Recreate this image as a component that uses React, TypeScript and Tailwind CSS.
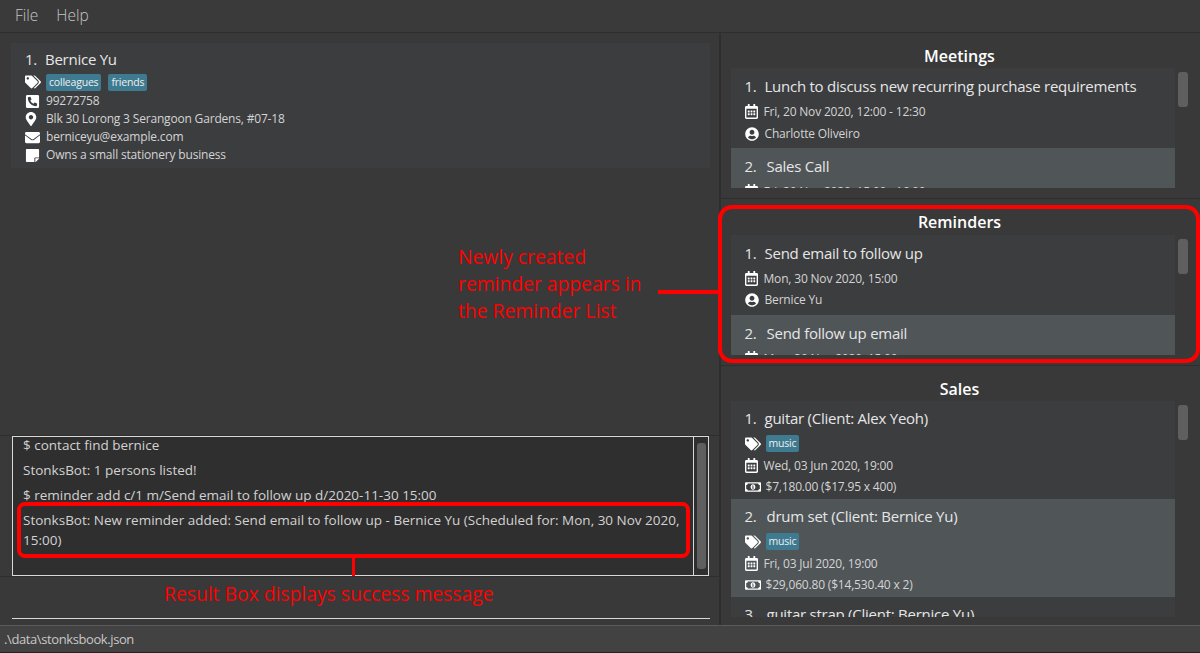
import React from 'react';
import {
  FaTags,
  FaPhoneSquareAlt,
  FaMapMarkerAlt,
  FaEnvelope,
  FaStickyNote,
  FaRegCalendarAlt,
  FaUserCircle,
  FaRegMoneyBillAlt,
} from 'react-icons/fa';

const Tag: React.FC<{ label: string }> = ({ label }) => (
  <span className="mr-[7px] inline-block h-[17px] rounded-[2px] bg-[#3e7b91] px-[3px] text-[10.5px] leading-[17px] tracking-[-0.2px] text-[#eeeeee]">
    {label}
  </span>
);

const Title: React.FC<{ index: string; text: string; gap?: string }> = ({ index, text, gap = 'w-[20px]' }) => (
  <div className="flex h-[20px] items-center text-[15px] font-medium tracking-[-0.25px] text-[#e6e6e6]">
    <span className={`shrink-0 ${gap}`}>{index}</span>
    <span className="whitespace-nowrap">{text}</span>
  </div>
);

const Meta: React.FC<{ icon: React.ReactNode; text: string; iconW?: string; extra?: string }> = ({
  icon,
  text,
  iconW = 'w-[19px]',
  extra = '',
}) => (
  <div className={`flex h-[21px] items-center text-[12px] tracking-[-0.18px] text-[#d4d4d4] ${extra}`}>
    <span className={`flex shrink-0 items-center text-white ${iconW}`}>{icon}</span>
    <span className="whitespace-nowrap">{text}</span>
  </div>
);

const Calendar = <FaRegCalendarAlt className="h-[15px] w-[13px]" />;
const User = <FaUserCircle className="h-[14px] w-[14px]" />;
const Money = <FaRegMoneyBillAlt className="h-[14px] w-[16px]" />;
const Tags = <FaTags className="h-[14px] w-[16px]" />;

const ListRow: React.FC<{ selected?: boolean; height: string; top?: string; children: React.ReactNode }> = ({
  selected,
  height,
  top = 'pt-[8px]',
  children,
}) => (
  <div className={`shrink-0 pl-[13.5px] ${top} ${height} ${selected ? 'bg-[#505558]' : 'bg-[#3c3d3f]'}`}>{children}</div>
);

const Panel: React.FC<{
  title: string;
  listHeight: string;
  panelHeight: string;
  titleHeight?: string;
  children: React.ReactNode;
}> = ({ title, listHeight, panelHeight, titleHeight = 'h-[24px]', children }) => (
  <section className={`flex shrink-0 flex-col border-b border-[#2e2e2e] pl-[10px] ${panelHeight}`}>
    <h2 className={`flex shrink-0 items-start justify-center pr-[12px] text-[16px] font-semibold leading-[24px] text-white ${titleHeight}`}>
      {title}
    </h2>
    <div className={`flex ${listHeight}`}>
      <div className="flex w-[444px] flex-col overflow-hidden">{children}</div>
      <div className="ml-[3px] w-[10px] pt-[4px]">
        <div className="h-[35px] rounded-[3px] bg-[#5f5f5f]" />
      </div>
    </div>
  </section>
);

const LogLine: React.FC<{ children: React.ReactNode }> = ({ children }) => (
  <p className="mb-[5px] text-[13.5px] font-medium leading-[20px] text-[#d2d2d2]">{children}</p>
);

export default function App() {
  return (
    <div className="relative flex h-[653px] w-[1200px] flex-col overflow-hidden bg-[#393939] font-['Open_Sans','Noto_Sans',sans-serif]">
      <header className="flex h-[33px] shrink-0 items-center gap-[18px] border-b border-[#2e2e2e] bg-[#3a3a3a] pl-[15px] text-[15.5px] font-light text-[#c4c4c4]">
        <span>File</span>
        <span>Help</span>
      </header>

      <main className="flex min-h-0 flex-1">
        <div className="flex w-[721px] shrink-0 flex-col border-r-2 border-[#2e2e2e]">
          <div className="min-h-0 flex-1 border-b border-[#2e2e2e] pl-[11px] pr-[9px] pt-[10px]">
            <article className="h-[125px] bg-[#3c3d3f] pl-[14px] pt-[6px]">
              <Title index="1." text="Bernice Yu" />
              <div className="mt-[3px] flex h-[20px] items-center">
                <span className="flex w-[21px] text-white">{Tags}</span>
                <Tag label="colleagues" />
                <Tag label="friends" />
              </div>
              <div className="flex h-[18px] items-center text-[12px] tracking-[-0.18px] text-[#d4d4d4]">
                <FaPhoneSquareAlt className="mr-[6px] h-[15px] w-[15px] text-white" />
                99272758
              </div>
              <div className="flex h-[18px] items-center text-[12px] tracking-[-0.18px] text-[#d4d4d4]">
                <span className="flex w-[21px]"><FaMapMarkerAlt className="h-[14px] w-[12px] text-white" /></span>
                Blk 30 Lorong 3 Serangoon Gardens, #07-18
              </div>
              <div className="flex h-[18px] items-center text-[12px] tracking-[-0.18px] text-[#d4d4d4]">
                <FaEnvelope className="mr-[6px] h-[15px] w-[15px] text-white" />
                berniceyu@example.com
              </div>
              <div className="flex h-[18px] items-center text-[12px] tracking-[-0.18px] text-[#d4d4d4]">
                <FaStickyNote className="mr-[6px] h-[15px] w-[15px] text-white" />
                Owns a small stationery business
              </div>
            </article>
          </div>

          <div className="ml-[12px] flex h-[140px] w-[697px] shrink-0 border border-[#d8d8d8] bg-[#2f2f2f]">
            <div className="w-[681px] shrink-0 overflow-hidden border-r border-[#d8d8d8] pl-[10px]">
              <div className="-mt-[2px]">
                <LogLine>$ contact find bernice</LogLine>
                <LogLine>StonksBot: 1 persons listed!</LogLine>
                <LogLine>$ reminder add c/1 m/Send email to follow up d/2020-11-30 15:00</LogLine>
                <LogLine>
                  StonksBot: New reminder added: Send email to follow up - Bernice Yu (Scheduled for: Mon, 30 Nov 2020, 15:00)
                </LogLine>
              </div>
            </div>
            <div className="flex-1 py-[6px] pl-[3px] pr-[2px]">
              <div className="h-full rounded-[3px] bg-[#5f5f5f]" />
            </div>
          </div>

          <div className="h-[49px] shrink-0 border-t border-[#2e2e2e] pl-[12px] pr-[9px]">
            <div className="h-[42px] border-b border-[#d8d8d8]" />
          </div>
        </div>

        <div className="flex min-w-0 flex-1 flex-col pt-[11px]">
          <Panel title="Meetings" panelHeight="h-[155px]" listHeight="h-[120px]">
            <ListRow height="h-[80px]">
              <Title index="1." text="Lunch to discuss new recurring purchase requirements" />
              <div className="mt-[5px]"><Meta icon={Calendar} text="Fri, 20 Nov 2020, 12:00 - 12:30" /></div>
              <Meta icon={User} text="Charlotte Oliveiro" iconW="w-[20px]" extra="mt-[1px]" />
            </ListRow>
            <ListRow selected height="h-[80px]">
              <Title index="2." text="Sales Call" gap="w-[22px]" />
              <div className="mt-[5px]"><Meta icon={Calendar} text="Fri, 20 Nov 2020, 15:00 - 16:00" /></div>
            </ListRow>
          </Panel>

          <Panel title="Reminders" panelHeight="h-[167px] pt-[11px]" titleHeight="h-[25px]" listHeight="h-[120px]">
            <ListRow height="h-[80px]">
              <Title index="1." text="Send email to follow up" />
              <div className="mt-[5px]"><Meta icon={Calendar} text="Mon, 30 Nov 2020, 15:00" /></div>
              <Meta icon={User} text="Bernice Yu" iconW="w-[20px]" />
            </ListRow>
            <ListRow selected height="h-[80px]">
              <Title index="2." text="Send follow up email" gap="w-[22px]" />
              <div className="mt-[5px]"><Meta icon={Calendar} text="Mon, 30 Nov 2020, 15:00" /></div>
            </ListRow>
          </Panel>

          <Panel title="Sales" panelHeight="flex-1 pt-[11px] border-b-0" listHeight="h-[216px]">
            <ListRow height="h-[98px]" top="pt-[7px]">
              <Title index="1." text="guitar (Client: Alex Yeoh)" />
              <div className="mt-[4px] flex h-[23px] items-center">
                <span className="flex w-[21px] text-white">{Tags}</span>
                <Tag label="music" />
              </div>
              <Meta icon={Calendar} text="Wed, 03 Jun 2020, 19:00" />
              <Meta icon={Money} text="$7,180.00 ($17.95 x 400)" iconW="w-[21px]" />
            </ListRow>
            <ListRow selected height="h-[98px]" top="pt-[7px]">
              <Title index="2." text="drum set (Client: Bernice Yu)" gap="w-[22px]" />
              <div className="mt-[4px] flex h-[23px] items-center">
                <span className="flex w-[21px] text-white">{Tags}</span>
                <Tag label="music" />
              </div>
              <Meta icon={Calendar} text="Fri, 03 Jul 2020, 19:00" />
              <Meta icon={Money} text="$29,060.80 ($14,530.40 x 2)" iconW="w-[21px]" />
            </ListRow>
            <ListRow height="h-[98px]" top="pt-[7px]">
              <Title index="3." text="guitar strap (Client: Bernice Yu)" gap="w-[22px]" />
            </ListRow>
          </Panel>
        </div>
      </main>

      <footer className="flex h-[28px] shrink-0 items-center border-b border-t border-b-[#222222] border-t-[#5a5a5a] bg-[#424242] pl-[4px] pt-[1px] text-[13px] tracking-[-0.4px] text-[#c8c8c8]">
        .\data\stonksbook.json
      </footer>

      {/* annotations drawn on top of the screenshot */}
      <div className="absolute left-[17px] top-[502px] h-[56px] w-[673px] rounded-[8px] border-[4px] border-[#ff0000]" />
      <div className="absolute left-[352px] top-[558px] h-[18px] w-[3px] bg-[#ff0000]" />
      <p className="absolute left-[164px] top-[581px] whitespace-nowrap text-[19.3px] leading-[26px] text-[#ff0000]">
        Result Box displays success message
      </p>
      <div className="absolute left-[718px] top-[205px] h-[158px] w-[482px] rounded-[14px] border-[4px] border-[#ff0000]" />
      <div className="absolute left-[658px] top-[290px] h-[4px] w-[62px] bg-[#ff0000]" />
      <p className="absolute left-[458px] top-[243px] whitespace-nowrap text-[19.3px] leading-[27px] text-[#ff0000]">
        Newly created
        <br />
        reminder appears in
        <br />
        the Reminder List
      </p>
    </div>
  );
}
